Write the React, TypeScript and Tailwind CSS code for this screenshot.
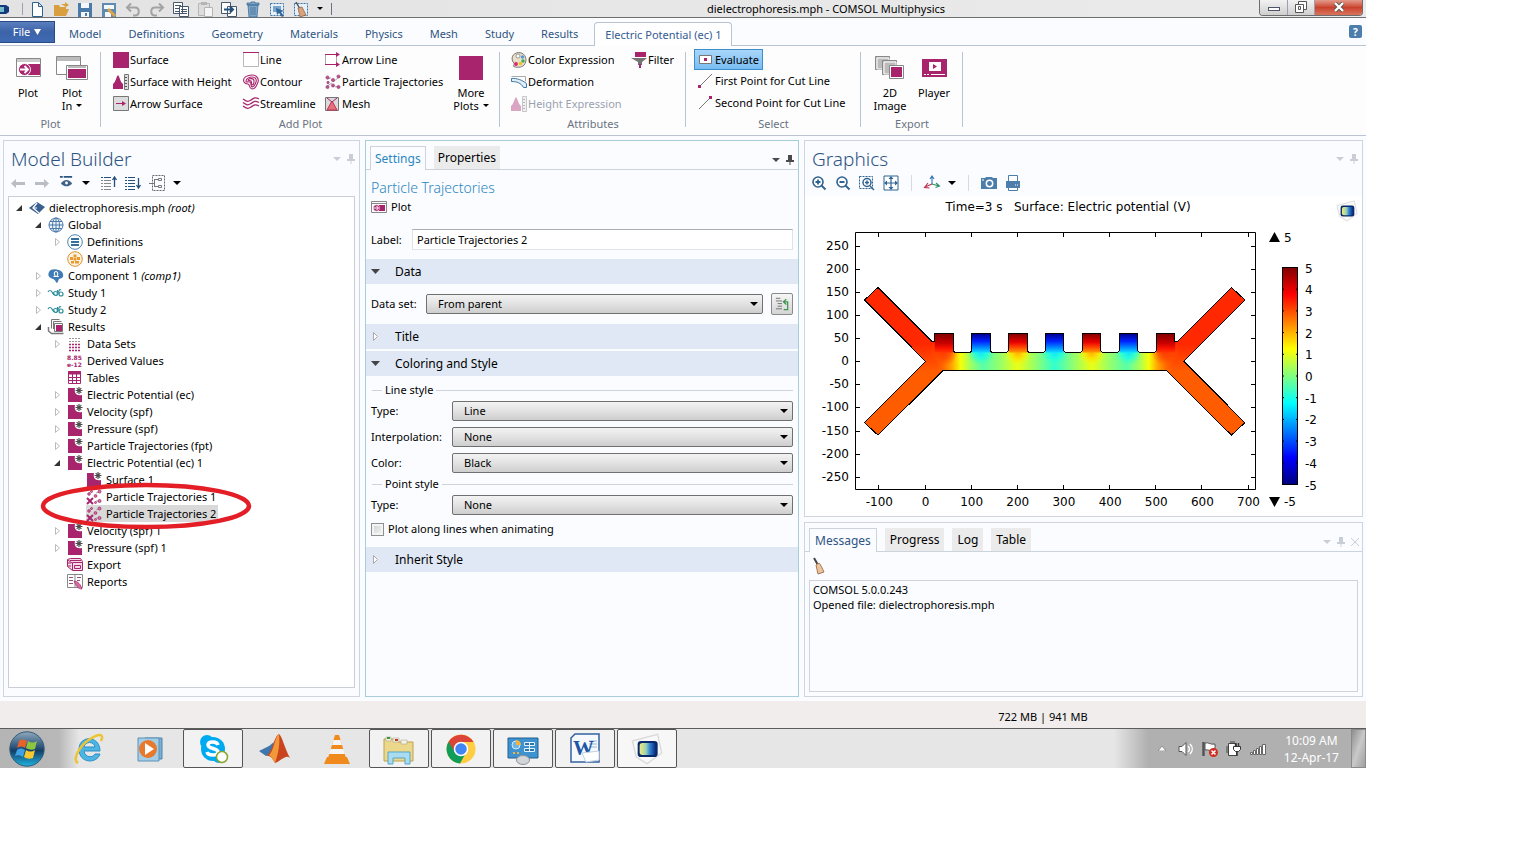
import React, { useState } from 'react';

const MAGENTA = '#a8246c';

const icons: Record<string, React.ReactNode> = {
  surface: <path d="M0 0h16v16H0z" fill={MAGENTA} />,
  surfaceHeight: (
    <>
      <path d="M0 15V10C3 8 3 3 5 1c2 2 2 7 5 9v5z" fill={MAGENTA} />
      <path d="M11.500 .5h4v15h-4z" fill="#ddd" stroke="#777" />
      <path d="M12 3.500h2M12 6.500h2M12 9.500h2M12 12.500h2" stroke="#555" />
    </>
  ),
  arrowSurface: (
    <>
      <path d="M.5 .5h15v14H.5z" fill="#dcdcdc" stroke="#777" />
      <path d="M3 7.500h7" stroke={MAGENTA} />
      <path d="M9 5l4 2.500L9 10z" fill={MAGENTA} />
    </>
  ),
  line: (
    <>
      <path d="M.5 .5h15v14H.5z" fill="#fff" stroke="#b9b9b9" />
      <path d="M0 .5h16" stroke={MAGENTA} />
    </>
  ),
  contour: (
    <g fill="none" stroke={MAGENTA} strokeWidth="1.100">
      <path d="M1 8C-1 3 5 1 9 1c5 0 7 4 6 7s-2 7-6 7c-4-1-1-4-4-5-2 0-3 0-4-2z" />
      <path d="M3 7c0-3 4-4 6-4 3 0 5 2 4 5s-2 5-4 5c-2-1 0-4-2-5S3 9 3 7z" />
      <path d="M5 6c1-2 6-2 6 1s-1 4-2 4c-1-1 0-3-1-4S5 7 5 6z" />
    </g>
  ),
  streamline: (
    <g fill="none" stroke={MAGENTA}>
      <path d="M0 3c4 3 5 3 8 1s4-3 8-1M0 6.500c4 3 5 3 8 1s4-3 8-1M0 10c4 3 5 3 8 1s4-3 8-1" strokeWidth="1.300" />
    </g>
  ),
  arrowLine: (
    <>
      <path d="M.5 2.500h11v10H.5z" fill="#fff" stroke="#aaa" />
      <path d="M0 2.500h12M0 12.500h12" stroke={MAGENTA} />
      <path d="M11 0l4 2.500L11 5zM11 10l4 2.500-4 2.500z" fill={MAGENTA} />
    </>
  ),
  particles: (
    <>
      <path d="M2 5l4-1M8 8l5-4M2 12l5-3M10 13l4-1" stroke="#aaa" />
      <g fill="#b8528a" stroke="#97386e" strokeWidth=".6">
        <circle cx="2.500" cy="3.500" r="1.600" />
        <circle cx="13.500" cy="2.500" r="1.600" />
        <circle cx="8" cy="6" r="1.600" />
        <circle cx="3" cy="8.500" r="1.200" />
        <circle cx="2.500" cy="13" r="1.600" />
        <circle cx="8" cy="11.500" r="1.600" />
        <circle cx="13.500" cy="13" r="1.600" />
      </g>
    </>
  ),
  mesh: (
    <>
      <path d="M.5 1.500h13v13H.5z" fill="#dadada" stroke="#777" />
      <path d="M2 14L7 5l5 9z" fill="#e4707c" stroke="#c03050" />
      <path d="M2 2l5 4 5-4" fill="none" stroke={MAGENTA} />
    </>
  ),
  palette: (
    <>
      <path d="M2 10C-1 4 4 0 9 .7c6 1 7 7 5 11s-7 4-11 3c-2-1 2-2-1-4.700z" fill="#ecdfc8" stroke="#777" />
      <circle cx="7" cy="4" r="2" fill="#fff" stroke="#777" strokeWidth=".7" />
      <circle cx="11.500" cy="5" r="1.700" fill="#4b9be0" />
      <circle cx="12" cy="9" r="1.700" fill="#3fae49" />
      <circle cx="9.500" cy="11.500" r="1.700" fill="#efc02c" />
      <circle cx="5" cy="12" r="1.900" fill="#d8276c" />
    </>
  ),
  deformation: (
    <>
      <path d="M.5 2.500h14v5" fill="none" stroke="#aaa" />
      <path d="M.5 4.500C6 4 11 6 15.500 9.500v4h-3C10 9 6 7.500 .5 7.500z" fill="#e3edf5" stroke="#3b76ab" />
    </>
  ),
  filter: (
    <>
      <path d="M4 0h11v5H4z" fill={MAGENTA} />
      <path d="M0 6h16l-5 4v3H7v-3z" fill="#747474" />
      <path d="M8 12h2v4H8z" fill={MAGENTA} />
    </>
  ),
  evaluate: (
    <>
      <path d="M1.500 3.500h12v8h-12z" fill="#fff" stroke="#777" />
      <path d="M6 6h3v3H6z" fill={MAGENTA} />
    </>
  ),
  firstPoint: (
    <>
      <path d="M1 14L14 1" stroke="#777" />
      <path d="M0 12h3v3H0z" fill={MAGENTA} />
    </>
  ),
  secondPoint: (
    <>
      <path d="M1 14L14 1" stroke="#777" />
      <path d="M11 1h3v3h-3z" fill={MAGENTA} />
    </>
  ),
  // tree
  root: (
    <>
      <path d="M0 8l8-6 8 5-7 7z" fill="#3a5f92" />
      <path d="M8 3L4 8l6 5" fill="none" stroke="#fff" strokeWidth="1.300" />
      <path d="M4 8h4" stroke="#fff" />
    </>
  ),
  global: (
    <g fill="none" stroke="#4a78a8">
      <circle cx="8" cy="8" r="7" fill="#eef5fb" />
      <ellipse cx="8" cy="8" rx="3.500" ry="7" />
      <path d="M8 1v14M1 8h14M2 4.500h12M2 11.500h12" />
    </g>
  ),
  definitions: (
    <>
      <circle cx="8" cy="8" r="7.300" fill="#fff" stroke="#4a82ad" />
      <path d="M4 5h8M4 8h8M4 11h8" stroke="#33709f" strokeWidth="2" />
    </>
  ),
  materials: (
    <>
      <circle cx="8" cy="8" r="7.300" fill="#fdf3e2" stroke="#e0912a" />
      <path d="M3 6h3v3H3zM6.500 3.500h3v3h-3zM10 6h3v3h-3zM6.500 7h3v2.500h-3zM4 10h3v2.500H4zM8 10h4v2.500H8z" fill="#e79a2e" />
    </>
  ),
  component: (
    <>
      <path d="M1 4c2-4 10-3 13 0 2 3 2 6-3 7-1 2-1 3-2 4-2-1-1-3-4-4S-1 8 1 4z" fill="#3f7cb5" />
      <path d="M5.500 8.500h2C5 5 7 3.500 8 3.500S11 5 8.800 8.500h2" fill="none" stroke="#fff" strokeWidth="1.100" />
    </>
  ),
  study: (
    <g fill="none" stroke="#2f8f9c" strokeWidth="1.200">
      <path d="M0 7c1-2 3-2 4 0s2 3 3 2" />
      <circle cx="7.500" cy="8.500" r="2" />
      <path d="M9.500 5v5" />
      <circle cx="13" cy="9" r="2" />
      <path d="M11 9c-1-4 1-5 2-4" />
    </g>
  ),
  results: (
    <>
      <path d="M3.500 9.500V.5h8M5.500 10V2.500h8" fill="none" stroke="#777" />
      <path d="M6.500 4.500h8v8h-8z" fill="#fff" stroke="#777" />
      <path d="M8 6h6v6H8z" fill={MAGENTA} />
      <path d="M.5 8v4l3 2.500h12" fill="none" stroke="#777" strokeWidth="1.500" />
    </>
  ),
  dataSets: (
    <g strokeDasharray="2 1" strokeWidth="1">
      <path d="M2 2.500h12M2 5.500h12" stroke="#999" />
      <path d="M2 8.500h12M2 11.500h12M2 14.500h12" stroke={MAGENTA} strokeWidth="1.500" />
    </g>
  ),
  derived: (
    <g fill={MAGENTA} fontFamily="DejaVu Sans" fontWeight="700" fontSize="6">
      <text x="0" y="7">8.85</text>
      <text x="0" y="14">e-12</text>
    </g>
  ),
  tables: (
    <>
      <path d="M1.500 1.500h12v12h-12z" fill="#fff" stroke={MAGENTA} />
      <path d="M1 3h13" stroke={MAGENTA} strokeWidth="3" />
      <path d="M1.500 7.500h12M1.500 10.500h12M5.500 1v13M9.500 1v13" stroke={MAGENTA} />
    </>
  ),
  plotGroup: (
    <>
      <path d="M1 1h7c-1 5 1 8 7 7v7H1z" fill={MAGENTA} />
      <path d="M12 0v7M8.500 3.500h7M9.700 1.200l4.600 4.600M14.300 1.200L9.700 5.800" stroke="#4d4d4d" strokeWidth="1.200" />
    </>
  ),
  trajectories: (
    <>
      <path d="M3 4l3-2M10 4l3-1M10 12h4" stroke="#aaa" />
      <g fill="#cd7aa3" stroke="#a8246c" strokeWidth=".8">
        <circle cx="3" cy="5" r="1.300" />
        <circle cx="5.500" cy="2.500" r="1" />
        <circle cx="13.500" cy="2.500" r="1.500" />
        <circle cx="9.500" cy="7" r="1.400" />
        <circle cx="13.500" cy="12" r="1.500" />
        <circle cx="9.500" cy="13.500" r="1" />
      </g>
      <path d="M1 9l6 6M7 9l-6 6" stroke={MAGENTA} strokeWidth="2" />
    </>
  ),
  exportNode: (
    <>
      <path d="M.5 2.500l3-1h10l2 3v9h-10l-5-4z" fill="#f3dbe7" stroke={MAGENTA} />
      <path d="M5.500 13V5.500h10M1 3l4 3M3 3.500h11M7.500 8.500h6v3h-6zM1 6h3M1 9h3" fill="none" stroke={MAGENTA} />
    </>
  ),
  reports: (
    <>
      <path d="M.5 .5h15v13H.5z" fill="#fff" stroke="#888" />
      <path d="M8 1v12" stroke="#888" />
      <path d="M2 3.500h4M2 6.500h4M2 9.500h4M10 3.500h4M10 6.500h3" stroke="#8a5573" />
      <path d="M7 7c4 0 7 4 8 8-4 0-6-3-8-8z" fill="#d36f9f" stroke={MAGENTA} strokeWidth=".7" />
    </>
  ),
  plotSmall: (
    <>
      <path d="M.5 2.500h15v11H.5z" fill="#fff" stroke="#888" />
      <path d="M0 4.500h16" stroke="#888" />
      <path d="M8 6h6v6H8z" fill={MAGENTA} />
      <circle cx="5.500" cy="9" r="3.200" fill={MAGENTA} stroke="#fff" strokeWidth=".5" />
      <path d="M3 9h4M5.500 7l2 2-2 2" fill="none" stroke="#fff" />
    </>
  ),
  // quick access
  newFile: <path d="M3.500 1.500h6l4 4v10h-10zM9.500 1.500v4h4" fill="#fff" stroke="#2f6390" />,
  open: <path d="M1 15V4h5l1 2h6v2h3l-3 7zM8 3h4v-2l4 3-3 2" fill="#d99f3f" />,
  save: (
    <>
      <path d="M1 2h14v14H1z" fill="#4a7aa8" />
      <path d="M4 2h8v5H4zM4 11h8v5H4z" fill="#f4f8fb" />
      <path d="M8 12h2v3H8z" fill="#4a7aa8" />
    </>
  ),
  saveAs: (
    <>
      <path d="M1 2h14v14H1z" fill="#5f8ab2" />
      <path d="M3 4h10v4H3zM4 11h6v5H4z" fill="#f4f8fb" />
      <path d="M7 8l7 7" stroke="#d9a54c" strokeWidth="3" />
    </>
  ),
  undo: (
    <>
      <path d="M3 6.500h7c5 0 5 8 0 8H8" fill="none" stroke="#a3a3a3" strokeWidth="2" />
      <path d="M6 2.500l-4 4 4 4" fill="none" stroke="#a3a3a3" strokeWidth="2" />
    </>
  ),
  redo: (
    <>
      <path d="M13 6.500H6c-5 0-5 8 0 8h2" fill="none" stroke="#a3a3a3" strokeWidth="2" />
      <path d="M10 2.500l4 4-4 4" fill="none" stroke="#a3a3a3" strokeWidth="2" />
    </>
  ),
  copy: (
    <>
      <path d="M.5 1.500h9v11h-9zM6.500 5.500h9v10h-9z" fill="#fff" stroke="#44576b" />
      <path d="M2 4.500h6M2 7.500h4M2 10.500h4M8 8.500h6M8 10.500h6M8 12.500h6" stroke="#44576b" />
    </>
  ),
  paste: (
    <>
      <path d="M1.500 2.500h11v12h-11z" fill="#ddd" stroke="#b5b5b5" />
      <path d="M4 1h6v3H4z" fill="#b5b5b5" />
      <path d="M7.500 6.500h8v9h-8z" fill="#f5f5f5" stroke="#b5b5b5" />
    </>
  ),
  duplicate: (
    <>
      <path d="M.5 1.500h9v11h-9zM6.500 5.500h9v10h-9z" fill="#fff" stroke="#44576b" />
      <path d="M3 8.500h9M9 5.500l3 3-3 3" fill="none" stroke="#24507c" strokeWidth="2" />
    </>
  ),
  trash: <path d="M3 4h10l-1 12H4zM2 2h4V1h4v1h4v2H2zM6 6v8M8 6v8M10 6v8" fill="#7fa6c9" stroke="#3d6c98" strokeWidth=".8" />,
  select: (
    <>
      <path d="M1.500 2.500h13v12h-13z" fill="#e7f0f8" stroke="#3b74a8" strokeDasharray="2 1" />
      <path d="M4 5h8v6H4z" fill="#7aa5cc" />
      <path d="M7 7l8 3-3 1 3 4-2 1-3-4-2 2z" fill="#2f669c" />
    </>
  ),
  clearSel: (
    <>
      <path d="M1.500 2.500h13v12h-13z" fill="#e7f0f8" stroke="#3b74a8" strokeDasharray="2 1" />
      <path d="M3 1l4 7" stroke="#555" strokeWidth="1.500" />
      <path d="M5 7l4-1 4 8-6 2z" fill="#d9a27a" stroke="#8a5a3c" strokeWidth=".7" />
    </>
  ),
  // panel toolbars
  back: <path d="M0 8.500l5-4.500v3h9v3H5v3z" fill="#b9bec5" />,
  forward: <path d="M14 8.500L9 4v3H0v3h9v3z" fill="#b9bec5" />,
  eye: (
    <>
      <path d="M1 2h3M5 2h9" stroke="#2c5580" strokeWidth="2" />
      <path d="M2 9c3-5 9-5 12 0-3 4-9 4-12 0z" fill="#41638a" />
      <circle cx="8" cy="8.500" r="1.500" fill="#fff" />
    </>
  ),
  collapse: (
    <>
      <path d="M0 2.500h10" stroke="#24507c" strokeDasharray="2 1 7" />
      <path d="M0 5.500h10M0 8.500h10M0 11.500h10M0 14.500h10" stroke="#888" strokeDasharray="2 1 7" />
      <path d="M13.500 12V3M11.500 5l2-3 2 3" fill="none" stroke="#24507c" strokeWidth="1.300" />
    </>
  ),
  expand: (
    <>
      <path d="M0 2.500h10M0 5.500h10M0 8.500h10M0 11.500h10M0 14.500h10" stroke="#24507c" strokeDasharray="2 1 7" />
      <path d="M13.500 3v9M11.500 10l2 3 2-3" fill="none" stroke="#24507c" strokeWidth="1.300" />
    </>
  ),
  treeView: (
    <>
      <path d="M3.500 .5h12v15h-12z" fill="none" stroke="#666" strokeDasharray="2 1" />
      <path d="M0 8.500h5M5.500 4v8M5 4.500h4M5 11.500h4" stroke="#777" />
      <path d="M9.500 3.500h3v2h-3zM9.500 10.500h3v2h-3z" fill="#fff" stroke="#777" />
    </>
  ),
  zoomIn: (
    <>
      <circle cx="7" cy="7" r="5" fill="#fff" stroke="#2f6390" strokeWidth="1.600" />
      <path d="M4.500 7h5M7 4.500v5M10.500 10.500l4 4" stroke="#2f6390" strokeWidth="1.800" />
    </>
  ),
  zoomOut: (
    <>
      <circle cx="7" cy="7" r="5" fill="#fff" stroke="#2f6390" strokeWidth="1.600" />
      <path d="M4.500 7h5M10.500 10.500l4 4" stroke="#2f6390" strokeWidth="1.800" />
    </>
  ),
  zoomBox: (
    <>
      <path d="M.5 1.500h13v12H.5z" fill="none" stroke="#2f6390" strokeDasharray="2 1" />
      <circle cx="8" cy="7.500" r="4" fill="#fff" stroke="#2f6390" strokeWidth="1.500" />
      <path d="M6 7.500h4M8 5.500v4M11 11l4 4" stroke="#2f6390" strokeWidth="1.500" />
    </>
  ),
  zoomExtents: (
    <>
      <path d="M1 1h14v14H1z" fill="#fff" stroke="#2f6390" />
      <path d="M8 2v12M2 8h12" stroke="#2f6390" strokeWidth="1.200" />
      <path d="M8 1l2.500 3h-5zM8 15l2.500-3h-5zM1 8l3-2.500v5zM15 8l-3-2.500v5z" fill="#2f6390" />
    </>
  ),
  axes: (
    <g fill="none" strokeWidth="1.100">
      <path d="M8 9V2M6 4l2-3 2 3" stroke="#3572c0" />
      <path d="M8 9l7 2M12 8l3.500 3-4 1.500" stroke="#2f8f60" />
      <path d="M8 9l-7 3M4 8L.5 12.500l5 .5" stroke="#c0304c" />
    </g>
  ),
  camera: (
    <>
      <path d="M0 3h4l1-1h6l1 1h4v11H0z" fill="#4c7dab" />
      <circle cx="8.500" cy="8.500" r="3.200" fill="none" stroke="#fff" strokeWidth="1.500" />
      <path d="M1 5h2" stroke="#fff" />
    </>
  ),
  printer: (
    <>
      <path d="M3.500 .5h9v7h-9z" fill="#fff" stroke="#4c7dab" />
      <path d="M1 6h14v7H1z" fill="#4c7dab" />
      <path d="M3.500 12.500h9v3h-9z" fill="#fff" stroke="#4c7dab" />
      <path d="M10 10h1M12 10h1" stroke="#fff" />
    </>
  ),
  broom: (
    <>
      <path d="M1 0l4 7" stroke="#444" strokeWidth="2" />
      <path d="M3 7l3-2c2 2 3 5 5 9l-6 2z" fill="#e9c49c" stroke="#a87650" />
    </>
  ),
  goTo: (
    <>
      <path d="M1 1.500h5M1 4.500h7M3 7.500h5M3 10.500h5M1 13.500h7" stroke="#666" />
      <path d="M10 14.500h4.500v-9h-4M13 2.500l-3.500 3 3.500 3" fill="none" stroke="#3f9450" strokeWidth="1.400" />
    </>
  ),
};

const Icon = ({ name, className = 'size-4' }: { name: string; className?: string }) => (
  <svg viewBox="0 0 16 16" className={`${className} shrink-0 overflow-visible`} aria-hidden="true">
    {icons[name]}
  </svg>
);

const Caret = ({ className = 'text-black' }: { className?: string }) => (
  <svg viewBox="0 0 8 4" className={`h-1 w-2 shrink-0 ${className}`} aria-hidden="true">
    <path d="M0 0h8L4 4z" fill="currentColor" />
  </svg>
);

const SmallCaret = () => (
  <svg viewBox="0 0 6 3" className="h-[3px] w-1.5" aria-hidden="true">
    <path d="M0 0h6L3 3z" />
  </svg>
);

const ComsolLogo = ({ className = 'size-6' }: { className?: string }) => (
  <svg viewBox="0 0 24 24" className={`${className} shrink-0`} aria-hidden="true">
    <defs>
      <linearGradient id="lens">
        <stop offset="0" stopColor="#f2ea7a" />
        <stop offset=".4" stopColor="#9ad0b8" />
        <stop offset=".65" stopColor="#2f7fd0" />
        <stop offset="1" stopColor="#0a2a7c" />
      </linearGradient>
    </defs>
    <path d="M1 6l19-5 3 14-11 8-8-5z" fill="#f9f9f9" stroke="#dadada" />
    <rect x="5" y="6" width="15" height="12" rx="2.500" fill="#0b2a6b" />
    <rect x="6.500" y="7.500" width="12" height="9" rx="2" fill="url(#lens)" />
  </svg>
);

/* ---------- Title bar and ribbon ---------- */

const quickAccess = [
  ['newFile', 'New'],
  ['open', 'Open'],
  ['save', 'Save'],
  ['saveAs', 'Save As'],
  ['undo', 'Undo'],
  ['redo', 'Redo'],
  ['copy', 'Copy'],
  ['paste', 'Paste'],
  ['duplicate', 'Duplicate'],
  ['trash', 'Delete'],
  ['select', 'Select'],
  ['clearSel', 'Clear Selection'],
];

const TitleBar = () => (
  <header className="relative flex h-[18px] items-center border-b border-[#6f6f6f] bg-gradient-to-r from-[#e3e3e3] to-[#ebebeb]">
    <div className="flex h-4 w-[29px] items-center justify-between pr-1.5">
      <svg viewBox="0 0 9 12" className="h-3 w-[9px]" aria-hidden="true">
        <path d="M0 2h6l3 2v5l-3 2H0z" fill="#123a7c" />
        <path d="M0 4h4v5H0z" fill="#74bcc9" />
      </svg>
      <span className="h-3 w-px bg-gray-400" />
    </div>
    <div className="flex gap-2">
      {quickAccess.map(([name, label]) => (
        <button key={name} type="button" aria-label={label} className="size-4">
          <Icon name={name} />
        </button>
      ))}
    </div>
    <button type="button" aria-label="Customize" className="ml-1 px-1">
      <SmallCaret />
    </button>
    <span className="ml-1 h-3 w-px bg-gray-500" />
    <h1 className="absolute left-1/2 ml-6 text-[11px] leading-4">dielectrophoresis.mph - COMSOL Multiphysics</h1>
    <div className="mr-[3px] mb-0.5 ml-auto flex h-4 overflow-hidden rounded-b border border-t-0 border-[#6d6d6d]">
      <button type="button" aria-label="Minimize" className="flex w-7 items-center justify-center border-r border-gray-400 bg-gradient-to-b from-[#f2f2f2] to-[#cfcfcf]">
        <span className="mt-1 h-1 w-3 border border-gray-600 bg-white" />
      </button>
      <button type="button" aria-label="Restore" className="flex w-[27px] items-center justify-center border-r border-gray-400 bg-gradient-to-b from-[#f2f2f2] to-[#cfcfcf]">
        <svg viewBox="0 0 12 12" className="size-3" aria-hidden="true">
          <path d="M3.500 .5h8v8h-8z" fill="#fff" stroke="#555" />
          <path d="M.5 3.500h8v8h-8z" fill="#fff" stroke="#555" />
          <path d="M3.500 5.500h2v3h-2z" fill="none" stroke="#555" />
        </svg>
      </button>
      <button type="button" aria-label="Close" className="flex w-[47px] items-center justify-center bg-gradient-to-b from-[#e29a8c] via-[#c9412d] to-[#d9745c]">
        <svg viewBox="0 0 12 10" className="h-2.5 w-3" aria-hidden="true">
          <path d="M2 1l8 8M10 1L2 9" stroke="#555" strokeWidth="4" />
          <path d="M2 1l8 8M10 1L2 9" stroke="#fff" strokeWidth="2.400" />
        </svg>
      </button>
    </div>
  </header>
);

const ribbonTabs = ['Model', 'Definitions', 'Geometry', 'Materials', 'Physics', 'Mesh', 'Study', 'Results'];

const RibbonTabs = () => (
  <nav className="flex h-7 gap-px border-b border-[#b9c3d2] bg-[#fafcff] text-[#2f5482]">
    <button type="button" className="mt-[3px] mb-0.5 flex w-[55px] items-center justify-center gap-1 border border-l-0 border-[#2a4a86] bg-gradient-to-b from-[#5b7fbe] via-[#3c63a8] to-[#3f6ab3] text-white">
      File
      <svg viewBox="0 0 7 6" className="h-1.5 w-[7px]" aria-hidden="true">
        <path d="M0 0h7L3.500 6z" fill="#fff" />
      </svg>
    </button>
    {ribbonTabs.map((tab) => (
      <button key={tab} type="button" className="px-[13px] pt-1">
        {tab}
      </button>
    ))}
    <button type="button" className="mt-1 -mb-px ml-0.5 rounded-t border border-b-0 border-[#b9c3d2] bg-white px-2.5 text-[#355a94]">
      Electric Potential (ec) 1
    </button>
    <button type="button" aria-label="Help" className="mt-[7px] mr-1 ml-auto size-[13px] rounded-xs bg-[#4c7dab] text-[10px] leading-3 font-bold text-white">
      ?
    </button>
  </nav>
);

const RibbonItem = ({ icon, label, disabled = false }: { icon: string; label: string; disabled?: boolean }) => (
  <button type="button" disabled={disabled} className="flex h-[22px] items-center gap-px whitespace-nowrap disabled:text-gray-400 disabled:[&>svg]:opacity-40">
    <Icon name={icon} />
    {label}
  </button>
);

const BigButton = ({ lines, caret = false, children }: { lines: string[]; caret?: boolean; children: React.ReactNode }) => (
  <button type="button" className="flex w-11 flex-col items-center leading-[13px] whitespace-nowrap">
    <span className="mt-[3px] mb-0.5 flex h-8 items-center">{children}</span>
    {lines.map((line, i) => (
      <span key={line} className="flex items-center gap-1">
        {line}
        {caret && i === lines.length - 1 && <SmallCaret />}
      </span>
    ))}
  </button>
);

const RibbonGroup = ({ title, className, inset, children }: { title: string; className: string; inset: string; children: React.ReactNode }) => (
  <section className={`relative flex h-full shrink-0 flex-col items-center after:absolute after:top-1.5 after:right-0 after:h-[75px] after:w-px after:bg-[#b9c3d2] ${className}`}>
    <div className={`flex h-[68px] w-full pt-[3px] ${inset}`}>{children}</div>
    <h2 className="mt-0.5 text-gray-500">{title}</h2>
  </section>
);

const Ribbon = () => (
  <div className="flex h-[90px] overflow-hidden border-b border-[#b9c3d2] bg-[#fdfdfe]">
    <RibbonGroup title="Plot" className="w-[101px]" inset="pl-1.5">
      <BigButton lines={['Plot']}>
        <svg viewBox="0 0 25 20" className="h-5 w-[25px]" aria-hidden="true">
          <path d="M.5 .5h24v18H.5z" fill="#fff" stroke="#888" />
          <path d="M1 2.500h23" stroke="#ccc" strokeWidth="3" />
          <path d="M12 6h12v11H12z" fill={MAGENTA} />
          <circle cx="8.500" cy="11.500" r="6" fill={MAGENTA} stroke="#fff" />
          <path d="M4 11.500h8M8.500 8l3.500 3.500L8.500 15" fill="none" stroke="#fff" strokeWidth="1.800" />
        </svg>
      </BigButton>
      <BigButton lines={['Plot', 'In']} caret>
        <svg viewBox="0 0 32 25" className="h-[25px] w-8" aria-hidden="true">
          <path d="M.5 .5h24v18H.5z" fill="#fff" stroke="#888" />
          <path d="M1 1h23v4H1z" fill="#bbb" />
          <path d="M10.500 9.500h21v14h-21z" fill="#fff" stroke="#888" />
          <path d="M12 10h18v2H12z" fill="#bbb" />
          <path d="M12 13h18v9H12z" fill={MAGENTA} />
        </svg>
      </BigButton>
    </RibbonGroup>
    <RibbonGroup title="Add Plot" className="w-[399px]" inset="pl-3">
      <div className="grid grid-cols-[130px_82px_124px] content-start">
        <RibbonItem icon="surface" label="Surface" />
        <RibbonItem icon="line" label="Line" />
        <RibbonItem icon="arrowLine" label="Arrow Line" />
        <RibbonItem icon="surfaceHeight" label="Surface with Height" />
        <RibbonItem icon="contour" label="Contour" />
        <RibbonItem icon="particles" label="Particle Trajectories" />
        <RibbonItem icon="arrowSurface" label="Arrow Surface" />
        <RibbonItem icon="streamline" label="Streamline" />
        <RibbonItem icon="mesh" label="Mesh" />
      </div>
      <BigButton lines={['More', 'Plots']} caret>
        <Icon name="surface" className="size-6" />
      </BigButton>
    </RibbonGroup>
    <RibbonGroup title="Attributes" className="w-[186px]" inset="pl-[11px]">
      <div className="grid grid-cols-[120px_50px] content-start">
        <RibbonItem icon="palette" label="Color Expression" />
        <RibbonItem icon="filter" label="Filter" />
        <RibbonItem icon="deformation" label="Deformation" />
        <span />
        <RibbonItem icon="surfaceHeight" label="Height Expression" disabled />
      </div>
    </RibbonGroup>
    <RibbonGroup title="Select" className="w-[175px]" inset="pl-2">
      <div className="flex flex-col items-start">
        <button type="button" className="flex h-[22px] items-center gap-px border border-[#3c8fc9] bg-gradient-to-b from-[#a9d6fa] to-[#79bdf3] px-[3px]">
          <Icon name="evaluate" />
          Evaluate
        </button>
        <div className="pl-1">
          <RibbonItem icon="firstPoint" label="First Point for Cut Line" />
          <RibbonItem icon="secondPoint" label="Second Point for Cut Line" />
        </div>
      </div>
    </RibbonGroup>
    <RibbonGroup title="Export" className="w-[102px]" inset="pl-[7px]">
      <BigButton lines={['2D', 'Image']}>
        <svg viewBox="0 0 30 24" className="h-6 w-[30px]" aria-hidden="true">
          <path d="M.5 .5h14v13H.5z" fill="#bbb" stroke="#888" />
          <path d="M2 2h12v11H2z" fill="none" stroke="#fff" />
          <path d="M7.500 4.500h14v14h-14z" fill="#bbb" stroke="#888" />
          <path d="M9 6h12v12H9z" fill="none" stroke="#fff" />
          <path d="M14.500 9.500h14v13h-14z" fill="#fff" stroke="#888" />
          <path d="M16 11h11v10H16z" fill={MAGENTA} />
        </svg>
      </BigButton>
      <BigButton lines={['Player']}>
        <svg viewBox="0 0 25 18" className="h-[18px] w-[25px]" aria-hidden="true">
          <path d="M0 0h25v18H0z" fill={MAGENTA} />
          <path d="M7 3h12v9H7z" fill="#fff" />
          <path d="M11 5l4 2.500-4 2.500z" fill={MAGENTA} />
          <path d="M2 15.500h2M5 15.500h2M9 15.500h14" stroke="#fff" />
        </svg>
      </BigButton>
    </RibbonGroup>
  </div>
);

/* ---------- Model Builder ---------- */

interface TreeNode {
  label: string;
  icon: string;
  level: number;
  note?: string;
  state?: 'open' | 'closed';
}

const nodes: TreeNode[] = [
  { label: 'dielectrophoresis.mph', note: '(root)', icon: 'root', level: 0, state: 'open' },
  { label: 'Global', icon: 'global', level: 1, state: 'open' },
  { label: 'Definitions', icon: 'definitions', level: 2, state: 'closed' },
  { label: 'Materials', icon: 'materials', level: 2 },
  { label: 'Component 1', note: '(comp1)', icon: 'component', level: 1, state: 'closed' },
  { label: 'Study 1', icon: 'study', level: 1, state: 'closed' },
  { label: 'Study 2', icon: 'study', level: 1, state: 'closed' },
  { label: 'Results', icon: 'results', level: 1, state: 'open' },
  { label: 'Data Sets', icon: 'dataSets', level: 2, state: 'closed' },
  { label: 'Derived Values', icon: 'derived', level: 2 },
  { label: 'Tables', icon: 'tables', level: 2 },
  { label: 'Electric Potential (ec)', icon: 'plotGroup', level: 2, state: 'closed' },
  { label: 'Velocity (spf)', icon: 'plotGroup', level: 2, state: 'closed' },
  { label: 'Pressure (spf)', icon: 'plotGroup', level: 2, state: 'closed' },
  { label: 'Particle Trajectories (fpt)', icon: 'plotGroup', level: 2, state: 'closed' },
  { label: 'Electric Potential (ec) 1', icon: 'plotGroup', level: 2, state: 'open' },
  { label: 'Surface 1', icon: 'plotGroup', level: 3 },
  { label: 'Particle Trajectories 1', icon: 'trajectories', level: 3 },
  { label: 'Particle Trajectories 2', icon: 'trajectories', level: 3 },
  { label: 'Velocity (spf) 1', icon: 'plotGroup', level: 2, state: 'closed' },
  { label: 'Pressure (spf) 1', icon: 'plotGroup', level: 2, state: 'closed' },
  { label: 'Export', icon: 'exportNode', level: 2 },
  { label: 'Reports', icon: 'reports', level: 2 },
];

const indents = ['pl-[3px]', 'pl-[22px]', 'pl-[41px]', 'pl-[60px]'];

const PanelTools = ({ className = 'text-[#c9ced6]', closable = false }: { className?: string; closable?: boolean }) => (
  <div className={`flex items-center gap-1.5 ${className}`}>
    <Caret className="" />
    <svg viewBox="0 0 8 10" className="h-2.5 w-2" aria-hidden="true">
      <path d="M2 0h4v5h2v2H4.500v3h-1V7H0V5h2z" fill="currentColor" />
    </svg>
    {closable && (
      <svg viewBox="0 0 8 8" className="size-2" aria-hidden="true">
        <path d="M0 0l8 8M8 0L0 8" stroke="currentColor" />
      </svg>
    )}
  </div>
);

const ModelBuilder = () => {
  const [selected, setSelected] = useState('Particle Trajectories 2');

  return (
    <section className="flex min-w-0 flex-col border border-[#cfd5df] bg-[#fafcff] px-1 pb-2">
      <div className="flex h-[34px] items-center justify-between pt-0.5 pl-[3px]">
        <h2 className="text-[19px] font-light text-[#2f5482]">Model Builder</h2>
        <PanelTools />
      </div>
      <div className="flex h-[21px] items-start gap-2 pl-[3px]">
        <Icon name="back" />
        <Icon name="forward" />
        <Icon name="eye" className="size-[15px]" />
        <span className="flex h-4 w-2 items-center">
          <Caret />
        </span>
        <Icon name="collapse" className="ml-[3px] size-4" />
        <Icon name="expand" />
        <Icon name="treeView" />
        <span className="flex h-4 items-center">
          <Caret />
        </span>
      </div>
      <div className="relative flex-1 border border-[#c9ced8] bg-white pt-0.5">
        <ul role="tree">
          {nodes.map((node) => (
            <li key={node.label} role="treeitem" aria-selected={selected === node.label} className={`flex h-[17px] items-center ${indents[node.level]}`}>
              <span className="w-[17px] pl-[3px]">
                {node.state && (
                  <svg viewBox="0 0 8 8" className="size-2" aria-hidden="true">
                    {node.state === 'open' ? (
                      <path d="M7 1v6H1z" fill="#333" />
                    ) : (
                      <path d="M2.500 .5l4 3.500-4 3.500z" fill="#fff" stroke="#bbb" />
                    )}
                  </svg>
                )}
              </span>
              <button
                type="button"
                onClick={() => setSelected(node.label)}
                className={`flex h-[17px] items-center gap-1 pr-0.5 whitespace-nowrap ${selected === node.label ? 'bg-[#d9d9d9]' : ''}`}
              >
                <Icon name={node.icon} />
                <span>
                  {node.label} {node.note && <em>{node.note}</em>}
                </span>
              </button>
            </li>
          ))}
        </ul>
        {/* hand-drawn mark round the two trajectory plots */}
        <svg viewBox="0 0 212 48" className="pointer-events-none absolute top-[285px] left-[31px] h-12 w-[212px]" aria-hidden="true">
          <ellipse cx="106" cy="24" rx="103" ry="21" fill="none" stroke="#e31e26" strokeWidth="4.500" />
        </svg>
      </div>
    </section>
  );
};

/* ---------- Settings ---------- */

const SectionHeader = ({ title, open = false }: { title: string; open?: boolean }) => (
  <button type="button" className="flex h-[25px] w-full items-center bg-[#dfe8f4] pl-[5px] text-left text-xs">
    <span className="w-6">
      <svg viewBox="0 0 9 9" className="size-[9px]" aria-hidden="true">
        {open ? <path d="M0 2h9L4.500 7z" fill="#444" /> : <path d="M2.500 .5l4 4-4 4z" fill="#fff" stroke="#aaa" />}
      </svg>
    </span>
    {title}
  </button>
);

const SelectBox = ({ id, value }: { id: string; value: string }) => (
  <div className="relative min-w-0 flex-1">
    <select id={id} className="block h-5 w-full appearance-none rounded-xs border border-[#707070] bg-gradient-to-b from-[#f3f3f3] via-[#e2e2e2] to-[#cecece] pl-[11px] leading-4">
      <option>{value}</option>
    </select>
    <Caret className="pointer-events-none absolute top-2 right-[5px] text-black" />
  </div>
);

const Field = ({ id, label, value }: { id: string; label: string; value: string }) => (
  <div className="flex h-5 items-center">
    <label htmlFor={id} className="w-[81px]">
      {label}
    </label>
    <SelectBox id={id} value={value} />
  </div>
);

const Legend = ({ children }: { children: React.ReactNode }) => (
  <div className="flex h-[22px] items-center gap-[3px] pl-px">
    <span className="h-px w-2.5 bg-[#cdd3db]" />
    <span>{children}</span>
    <span className="h-px flex-1 bg-[#cdd3db]" />
  </div>
);

const Settings = () => {
  const [label, setLabel] = useState('Particle Trajectories 2');
  const [along, setAlong] = useState(false);

  return (
    <section className="min-w-0 border border-[#a9cdd8] bg-[#fafcff]">
      <div className="flex h-[29px] items-end border-b border-[#cdd3db] pr-1 pl-1 text-xs">
        <button type="button" className="-mb-px h-6 border border-b-0 border-[#cdd3db] bg-[#fafcff] px-1 text-[#2a86c1]">
          Settings
        </button>
        <button type="button" className="ml-2 h-[23px] bg-[#ebebeb] px-1">
          Properties
        </button>
        <div className="mb-1 ml-auto">
          <PanelTools className="text-[#4a4a4a]" />
        </div>
      </div>
      <div className="px-[5px]">
        <h2 className="pt-2 text-sm leading-5 font-light text-[#2a86c1]">Particle Trajectories</h2>
        <button type="button" className="flex h-[18px] items-center gap-1">
          <Icon name="plotSmall" />
          Plot
        </button>
        <div className="mt-[13px] flex h-[21px] items-center">
          <label htmlFor="label" className="w-[41px]">
            Label:
          </label>
          <input
            id="label"
            value={label}
            onChange={(e) => setLabel(e.target.value)}
            className="h-[21px] min-w-0 flex-1 border border-[#e0e3e8] border-t-[#abadb3] bg-white px-1"
          />
        </div>
      </div>
      <div className="mt-[9px]">
        <SectionHeader title="Data" open />
        <div className="flex h-10 items-center px-[5px]">
          <label htmlFor="dataset" className="w-[55px]">
            Data set:
          </label>
          <SelectBox id="dataset" value="From parent" />
          <button type="button" aria-label="Go to source" className="ml-2 flex size-[22px] items-center justify-center rounded-xs border border-[#8a8a8a] bg-gradient-to-b from-[#f6f6f6] to-[#d4d4d4]">
            <Icon name="goTo" className="size-3.5" />
          </button>
        </div>
        <SectionHeader title="Title" />
        <div className="mt-0.5">
          <SectionHeader title="Coloring and Style" open />
        </div>
        <div className="px-[5px] pt-[3px]">
          <Legend>Line style</Legend>
          <div className="flex flex-col gap-1.5">
            <Field id="line-type" label="Type:" value="Line" />
            <Field id="interpolation" label="Interpolation:" value="None" />
            <Field id="color" label="Color:" value="Black" />
          </div>
          <Legend>Point style</Legend>
          <Field id="point-type" label="Type:" value="None" />
          <label className="mt-1.5 flex h-4 items-center gap-1">
            <input
              type="checkbox"
              checked={along}
              onChange={(e) => setAlong(e.target.checked)}
              className="mt-0 size-[13px] appearance-none border border-[#8e8f8f] bg-gradient-to-br from-[#cfcfcf] to-[#f6f6f6] shadow-[inset_0_0_0_2px_#f4f4f4] checked:bg-gray-600 checked:bg-none"
            />
            Plot along lines when animating
          </label>
        </div>
        <div className="mt-2.5">
          <SectionHeader title="Inherit Style" />
        </div>
      </div>
    </section>
  );
};

/* ---------- Graphics ---------- */

// axis units to drawing units
const px = (x: number) => 120.5 + x * 0.4615;
const py = (y: number) => 165.3 - y * 0.4615;

const electrodes = [20, 100, 180, 260, 340, 420, 500];
const xTicks = [-100, 0, 100, 200, 300, 400, 500, 600, 700];
const yTicks = [250, 200, 150, 100, 50, 0, -50, -100, -150, -200, -250];

const outline = () => {
  const pts: number[][] = [[0, 0], [-132, 133], [-103, 160], [14, 43], [20, 43]];
  electrodes.forEach((x, i) => {
    if (i > 0) pts.push([x - 3, 20], [x, 23]);
    pts.push([x, 60], [x + 40, 60]);
    if (i < electrodes.length - 1) pts.push([x + 40, 23], [x + 43, 20]);
  });
  pts.push([540, 43], [546, 43], [663, 160], [692, 133], [560, 0], [692, -133], [663, -160], [522, -20], [38, -20], [-103, -160], [-132, -133]);
  return pts.map(([x, y], i) => `${i ? 'L' : 'M'}${px(x)} ${py(y)}`).join('') + 'Z';
};

// potential along the channel, axis position and colour
const channelStops: [number, string][] = [
  [20, '#ff5200'],
  [42, '#ff7400'],
  [58, '#ffa800'],
  [76, '#f6ff08'],
  [98, '#a0ff60'],
  [125, '#58ffa8'],
  [158, '#90ff70'],
  [200, '#eaff15'],
  [240, '#90ff70'],
  [280, '#30ffd0'],
  [320, '#90ff70'],
  [360, '#eaff15'],
  [402, '#90ff70'],
  [435, '#58ffa8'],
  [462, '#a0ff60'],
  [484, '#f6ff08'],
  [502, '#ffa800'],
  [518, '#ff7400'],
  [540, '#ff5200'],
];

const Plot = () => {
  const d = outline();
  return (
    <svg viewBox="0 0 557 320" className="block w-full bg-white" fontFamily="DejaVu Sans, sans-serif" fontSize="12" role="img" aria-label="Surface: Electric potential (V)">
      <defs>
        <clipPath id="shape">
          <path d={d} />
        </clipPath>
        <linearGradient id="channel" gradientUnits="userSpaceOnUse" x1={px(0)} y1="0" x2={px(560)} y2="0">
          <stop offset=".02" stopColor="#ff5200" stopOpacity="0" />
          {channelStops.map(([x, c]) => (
            <stop key={x} offset={x / 560} stopColor={c} stopOpacity={x === 20 || x === 540 ? 0 : 1} />
          ))}
        </linearGradient>
        <linearGradient id="arms" x1="0" y1="0" x2="0" y2="1">
          <stop offset="0" stopColor="#ff2800" />
          <stop offset=".4" stopColor="#ff2800" />
          <stop offset=".56" stopColor="#ff5c00" />
          <stop offset="1" stopColor="#ff5c00" />
        </linearGradient>
        <linearGradient id="hot" x1="0" y1="0" x2="0" y2="1">
          <stop offset="0" stopColor="#800000" />
          <stop offset=".45" stopColor="#e80000" />
          <stop offset=".7" stopColor="#ff4000" />
          <stop offset="1" stopColor="#ffa000" />
        </linearGradient>
        <linearGradient id="hotEnd" x1="0" y1="0" x2="0" y2="1">
          <stop offset="0" stopColor="#800000" />
          <stop offset=".5" stopColor="#c80000" />
          <stop offset=".8" stopColor="#ff1500" />
          <stop offset="1" stopColor="#ff3a00" />
        </linearGradient>
        <linearGradient id="cold" x1="0" y1="0" x2="0" y2="1">
          <stop offset="0" stopColor="#00008a" />
          <stop offset=".4" stopColor="#0020ff" />
          <stop offset=".75" stopColor="#0090ff" />
          <stop offset="1" stopColor="#10e0ff" />
        </linearGradient>
        <radialGradient id="hotGlow">
          <stop offset="0" stopColor="#ffa800" />
          <stop offset=".5" stopColor="#ffe000" stopOpacity=".8" />
          <stop offset="1" stopColor="#f0ff10" stopOpacity="0" />
        </radialGradient>
        <radialGradient id="endGlow">
          <stop offset="0" stopColor="#ff3600" />
          <stop offset=".5" stopColor="#ff4400" stopOpacity=".7" />
          <stop offset="1" stopColor="#ff6000" stopOpacity="0" />
        </radialGradient>
        <radialGradient id="coldGlow">
          <stop offset="0" stopColor="#10e0ff" />
          <stop offset=".5" stopColor="#20ffe0" stopOpacity=".8" />
          <stop offset="1" stopColor="#50ffb0" stopOpacity="0" />
        </radialGradient>
        <linearGradient id="jet" x1="0" y1="0" x2="0" y2="1">
          <stop offset="0" stopColor="#800000" />
          <stop offset=".125" stopColor="#ff0000" />
          <stop offset=".375" stopColor="#ffff00" />
          <stop offset=".625" stopColor="#00ffff" />
          <stop offset=".875" stopColor="#0000ff" />
          <stop offset="1" stopColor="#000080" />
        </linearGradient>
      </defs>
      <text x="263" y="15" textAnchor="middle">{'Time=3 s\u00a0\u00a0 Surface: Electric potential (V)'}</text>

      <g clipPath="url(#shape)">
        <rect x="40" y="80" width="420" height="170" fill="url(#arms)" />
        <rect x={px(20)} y={py(22)} width={px(540) - px(20)} height="20" fill="url(#channel)" />
        {electrodes.map((x, i) => {
          const end = i === 0 || i === electrodes.length - 1;
          const glow = end ? 'url(#endGlow)' : i % 2 ? 'url(#coldGlow)' : 'url(#hotGlow)';
          const fill = end ? 'url(#hotEnd)' : i % 2 ? 'url(#cold)' : 'url(#hot)';
          return (
            <g key={x}>
              <ellipse cx={px(x + 20)} cy={py(20)} rx="14" ry="14" fill={glow} />
              <rect x={px(x)} y={py(60)} width="19" height="19" fill={fill} />
            </g>
          );
        })}
      </g>
      <path d={d} fill="none" stroke="#000" shapeRendering="crispEdges" />

      <path d="M50.500 36.500h400v257h-400z" fill="none" stroke="#000" />
      {xTicks.map((t) => (
        <g key={t}>
          <path d={`M${Math.round(px(t)) - 0.5} 36v5M${Math.round(px(t)) - 0.5} 289v5`} stroke="#000" />
          <text x={px(t)} y="310" textAnchor="middle">
            {t}
          </text>
        </g>
      ))}
      {yTicks.map((t) => (
        <g key={t}>
          <path d={`M50 ${Math.round(py(t)) + 0.5}h5M446 ${Math.round(py(t)) + 0.5}h5`} stroke="#000" />
          <text x="44" y={py(t) + 4} textAnchor="end">
            {t}
          </text>
        </g>
      ))}

      <path d="M464 46l5.500-10 5.500 10zM464 301l5.500 10 5.500-10z" />
      <text x="479" y="46">5</text>
      <text x="479" y="310">-5</text>
      <path d="M477.500 71.500h15v217h-15z" fill="url(#jet)" stroke="#000" />
      {[5, 4, 3, 2, 1, 0, -1, -2, -3, -4, -5].map((v) => (
        <g key={v}>
          <path d={`M477 ${180 - v * 21.7}h2M491 ${180 - v * 21.7}h2`} stroke="#000" />
          <text x="500" y={185 - v * 21.7}>
            {v}
          </text>
        </g>
      ))}
    </svg>
  );
};

const Graphics = () => (
  <section className="border border-[#cfd5df] bg-[#fafcff]">
    <div className="flex h-[34px] items-center justify-between pt-0.5 pr-1 pl-[7px]">
      <h2 className="text-[19px] font-light text-[#2f5482]">Graphics</h2>
      <PanelTools />
    </div>
    <div className="flex h-[21px] items-start gap-2 pl-1.5">
      <Icon name="zoomIn" />
      <Icon name="zoomOut" />
      <Icon name="zoomBox" />
      <Icon name="zoomExtents" />
      <span className="mx-1 h-4 w-px bg-[#d5d9e0]" />
      <Icon name="axes" />
      <span className="flex h-4 items-center">
        <Caret />
      </span>
      <span className="mx-1 h-4 w-px bg-[#d5d9e0]" />
      <Icon name="camera" />
      <Icon name="printer" />
    </div>
    <div className="relative">
      <Plot />
      <ComsolLogo className="absolute top-1 right-1 size-[22px]" />
    </div>
  </section>
);

const Messages = () => (
  <section className="flex min-h-[175px] flex-1 flex-col border border-[#cfd5df] bg-[#fafcff]">
    <div className="flex h-[29px] items-end border-b border-[#cdd3db] pr-[3px] pl-1 text-xs">
      <button type="button" className="-mb-px h-6 border border-b-0 border-[#cdd3db] bg-[#fafcff] px-[5px] text-[#2f5482]">
        Messages
      </button>
      <div className="ml-2 flex gap-2">
        {['Progress', 'Log', 'Table'].map((tab) => (
          <button key={tab} type="button" className="h-[23px] bg-[#ebebeb] px-[5px]">
            {tab}
          </button>
        ))}
      </div>
      <div className="mb-1 ml-auto">
        <PanelTools closable />
      </div>
    </div>
    <button type="button" aria-label="Clear" className="my-1.5 ml-2 size-4">
      <Icon name="broom" />
    </button>
    <div className="mx-1 mb-1 flex-1 border border-[#cdd3db] px-[3px] pt-px leading-[15px]">
      <p>COMSOL 5.0.0.243</p>
      <p>Opened file: dielectrophoresis.mph</p>
    </div>
  </section>
);

/* ---------- Windows taskbar ---------- */

const taskIcons: { name: string; active?: boolean; art: React.ReactNode }[] = [
  {
    name: 'Internet Explorer',
    art: (
      <>
        <path d="M27 18H11c1 7 9 7 11 3h5c-3 10-21 10-21-5 0-14 21-14 21 2z" fill="#4db5e3" stroke="#2c8fc4" />
        <path d="M11 14h11c-1-6-10-6-11 0z" fill="#e7e7e7" stroke="#2c8fc4" />
        <path d="M5 30C-1 27 6 13 17 6s14-4 11 2" fill="none" stroke="#efc32f" strokeWidth="2.500" />
      </>
    ),
  },
  {
    name: 'Media Player',
    art: (
      <>
        <path d="M10 5h17v21H10z" fill="#7bb0d2" stroke="#4b86ac" />
        <path d="M3 5h21v23H3z" fill="#a5cde6" stroke="#5b92b5" />
        <circle cx="13" cy="16" r="9" fill="#e8782a" />
        <path d="M10 10l9 6-9 6z" fill="#fff" />
      </>
    ),
  },
  {
    name: 'Skype',
    active: true,
    art: (
      <>
        <circle cx="16" cy="16" r="12" fill="#00aaf0" />
        <circle cx="10" cy="9" r="7" fill="#00aaf0" />
        <circle cx="22" cy="23" r="7" fill="#00aaf0" />
        <path d="M21 12c-1-4-10-4-10 0s10 3 10 7-10 4-11 0" fill="none" stroke="#fff" strokeWidth="3.500" />
        <circle cx="25" cy="24" r="5.500" fill="#fff" stroke="#8aa52f" strokeWidth="1.500" />
      </>
    ),
  },
  {
    name: 'MATLAB',
    art: (
      <>
        <path d="M0 18l10-5 5-4-3 12-5 2z" fill="#3f77ad" />
        <path d="M7 23c6-2 8-20 13-22 3 2 6 15 11 24-4-4-8 2-15 5-2-3-4-8-9-7z" fill="#c9441c" />
        <path d="M20 1c1 8 0 18-4 29-2-3-4-7-6-8C15 18 16 3 20 1z" fill="#f0983a" />
      </>
    ),
  },
  {
    name: 'VLC',
    art: (
      <>
        <path d="M6 24h20l3 7H3z" fill="#f08a1c" />
        <path d="M14 2h4l7 23c-3 3-15 3-18 0z" fill="#f08a1c" />
        <path d="M12.500 7h7l1.500 5H11zM9.500 16h13l1.500 5H8z" fill="#f4f4f4" />
      </>
    ),
  },
  {
    name: 'Explorer',
    active: true,
    art: (
      <>
        <path d="M1 6h12l2 3h15v19H1z" fill="#ecd88b" stroke="#bfa24b" />
        <path d="M3 4h5v4H3zM10 5h6v4h-6zM18 7h6v4h-6z" fill="#f7f2da" stroke="#999" strokeWidth=".5" />
        <path d="M4 4h3v2H4z" fill="#3f9a3a" />
        <path d="M12 6h3v2h-3z" fill="#c0392b" />
        <path d="M5 31V19h22v12h-5v-6H10v6z" fill="#a9dcf0" stroke="#58a5c6" />
      </>
    ),
  },
  {
    name: 'Chrome',
    active: true,
    art: (
      <>
        <circle cx="16" cy="16" r="14.500" fill="#ffcd42" />
        <path d="M16 16L3.500 8.700A14.500 14.500 0 0 0 15 30.500l5-9z" fill="#0f9d58" />
        <path d="M16 9h12.600a14.500 14.500 0 0 0-25-.3l6 10z" fill="#db4437" />
        <circle cx="16" cy="16" r="6.500" fill="#4285f4" stroke="#fff" strokeWidth="1.500" />
      </>
    ),
  },
  {
    name: 'Control Panel',
    active: true,
    art: (
      <>
        <path d="M1 5h30v20H1z" fill="#3e92cf" stroke="#22618f" />
        <circle cx="9" cy="12" r="4" fill="#6bb5e5" stroke="#d5ecfa" />
        <path d="M9 12V7a5 5 0 0 1 5 5z" fill="#f3b33e" />
        <path d="M17.500 9.500h10v3h-10zM17.500 15.500h10v3h-10zM22.500 9v10" fill="#2c76ad" stroke="#e4f3fc" />
        <path d="M6 20h2M10 20h2" stroke="#f3b33e" strokeWidth="2" />
        <ellipse cx="16" cy="27" rx="6.500" ry="4.500" fill="#d3d6d9" stroke="#8c9196" />
      </>
    ),
  },
  {
    name: 'Word',
    active: true,
    art: (
      <>
        <path d="M6 1h24v28H2V5z" fill="#f5f9fe" stroke="#33619f" strokeWidth="1.500" />
        <path d="M20 8h8M20 11h8M20 14h8" stroke="#9db3d0" />
        <text x="4" y="22" fill="#1f55a5" fontFamily="Liberation Serif" fontWeight="700" fontSize="21">
          W
        </text>
        <path d="M13 20l17-2v9l-13 2z" fill="#fff" stroke="#c3d0e2" />
      </>
    ),
  },
];

const Taskbar = () => (
  <footer className="flex h-10 items-stretch border-t border-[#5c5c5c] bg-gradient-to-r from-[#e6e6e6] to-[#e9e9e9]">
    <div className="flex w-[59px] items-center bg-gradient-to-r from-[#b4b4b4] to-[#b8b8b8] pl-[9px]">
      <button type="button" aria-label="Start">
        <svg viewBox="0 0 36 36" className="size-9" aria-hidden="true">
          <defs>
            <linearGradient id="orb" x1="0" y1="0" x2="0" y2="1">
              <stop offset="0" stopColor="#8fa9bd" />
              <stop offset=".45" stopColor="#2b5278" />
              <stop offset=".55" stopColor="#123e66" />
              <stop offset="1" stopColor="#1fb3e0" />
            </linearGradient>
          </defs>
          <circle cx="18" cy="18" r="17.200" fill="url(#orb)" stroke="#335a78" />
          <path d="M10 10c2-2 5-2 8 0l-2 7c-3-2-5-2-8 0z" fill="#e8632b" />
          <path d="M19 10c3 2 6 2 9 0l-2 8c-3 1-6 1-9-1z" fill="#8bc63e" />
          <path d="M8 19c3-2 5-2 8 0l-2 7c-3-2-6-2-8-1z" fill="#3fa0e2" />
          <path d="M17 19c3 2 6 2 9 0l-2 8c-3 1-6 1-9-1z" fill="#f8c831" />
        </svg>
      </button>
    </div>
    <div className="flex flex-1 gap-0.5 bg-[linear-gradient(to_right,#b8b8b8,#e6e6e6_20px)]">
      {taskIcons.map((task) => (
        <button
          key={task.name}
          type="button"
          aria-label={task.name}
          className={`flex w-[60px] items-center justify-center ${task.active ? 'rounded-xs border border-[#555] bg-[#f2f2f2]' : ''}`}
        >
          <svg viewBox="0 0 32 32" className="size-8" aria-hidden="true">
            {task.art}
          </svg>
        </button>
      ))}
      <button type="button" aria-label="COMSOL" className="flex w-[60px] items-center justify-center rounded-xs border border-[#555] bg-[#f7f7f7]">
        <ComsolLogo className="size-8" />
      </button>
    </div>
    <div className="flex items-center gap-2 bg-[linear-gradient(to_right,#e8e8e8,#b0b0b0_35px)] pl-[45px]">
      <svg viewBox="0 0 8 5" className="mr-1 h-[5px] w-2" aria-hidden="true">
        <path d="M0 5l4-5 4 5z" fill="#fff" stroke="#777" strokeWidth=".7" />
      </svg>
      <svg viewBox="0 0 16 16" className="size-4" aria-hidden="true">
        <path d="M1 5.500h3l4-4v13l-4-4H1z" fill="#fff" stroke="#555" />
        <path d="M10 5c2 2 2 4 0 6M12 3c3 3 3 7 0 10" fill="none" stroke="#fff" strokeWidth="1.400" />
      </svg>
      <svg viewBox="0 0 16 16" className="size-4" aria-hidden="true">
        <path d="M1.500 1v14" stroke="#555" strokeWidth="2.500" />
        <path d="M3 2c4-1 5 2 10 1v7C8 11 7 8 3 9z" fill="#fff" stroke="#555" />
        <circle cx="11.500" cy="11.500" r="4.500" fill="#cf2b1f" />
        <path d="M9.500 9.500l4 4M13.500 9.500l-4 4" stroke="#fff" strokeWidth="1.500" />
      </svg>
      <svg viewBox="0 0 16 16" className="size-4" aria-hidden="true">
        <path d="M2.500 2.500h8v12h-8z" fill="#fff" stroke="#444" />
        <path d="M1 5v7M4 1h5" stroke="#444" />
        <path d="M9.500 2v4M12.500 2v4" stroke="#333" strokeWidth="1.400" />
        <path d="M7.500 5.500h7v3l-2 2h-3l-2-2z" fill="#fff" stroke="#333" />
        <path d="M11 11v4" stroke="#333" strokeWidth="1.500" />
      </svg>
      <svg viewBox="0 0 16 16" className="size-4" aria-hidden="true">
        <path d="M.5 11.500h2v2h-2zM3.500 9.500h2v4h-2zM6.500 7.500h2v6h-2zM9.500 5.500h2v8h-2zM12.500 3.500h3v10h-3z" fill="#fff" stroke="#666" />
      </svg>
      <div className="ml-2.5 text-center text-xs leading-[17px] text-white">
        <div>10:09 AM</div>
        <div>12-Apr-17</div>
      </div>
      <button type="button" aria-label="Show desktop" className="ml-1 h-full w-[15px] border border-[#8a8a8a] bg-gradient-to-br from-[#8f8f8f] via-[#c9c9c9] to-[#a0a0a0]" />
    </div>
  </footer>
);

export default function App() {
  return (
    <div className="min-h-screen bg-white pr-[163px] font-['Noto_Sans','Open_Sans',sans-serif] text-[11px] leading-4 text-black">
      <TitleBar />
      <RibbonTabs />
      <Ribbon />
      <main className="grid min-h-[565px] grid-cols-[minmax(0,357fr)_minmax(0,434fr)_minmax(0,559fr)] gap-[5px] bg-[#fafcff] px-[3px] py-1">
        <ModelBuilder />
        <Settings />
        <div className="flex min-w-0 flex-col gap-[5px]">
          <Graphics />
          <Messages />
        </div>
      </main>
      <div className="flex h-[27px] items-center justify-center bg-[#f0edec] pt-1 pl-[720px]">722 MB | 941 MB</div>
      <Taskbar />
    </div>
  );
}
